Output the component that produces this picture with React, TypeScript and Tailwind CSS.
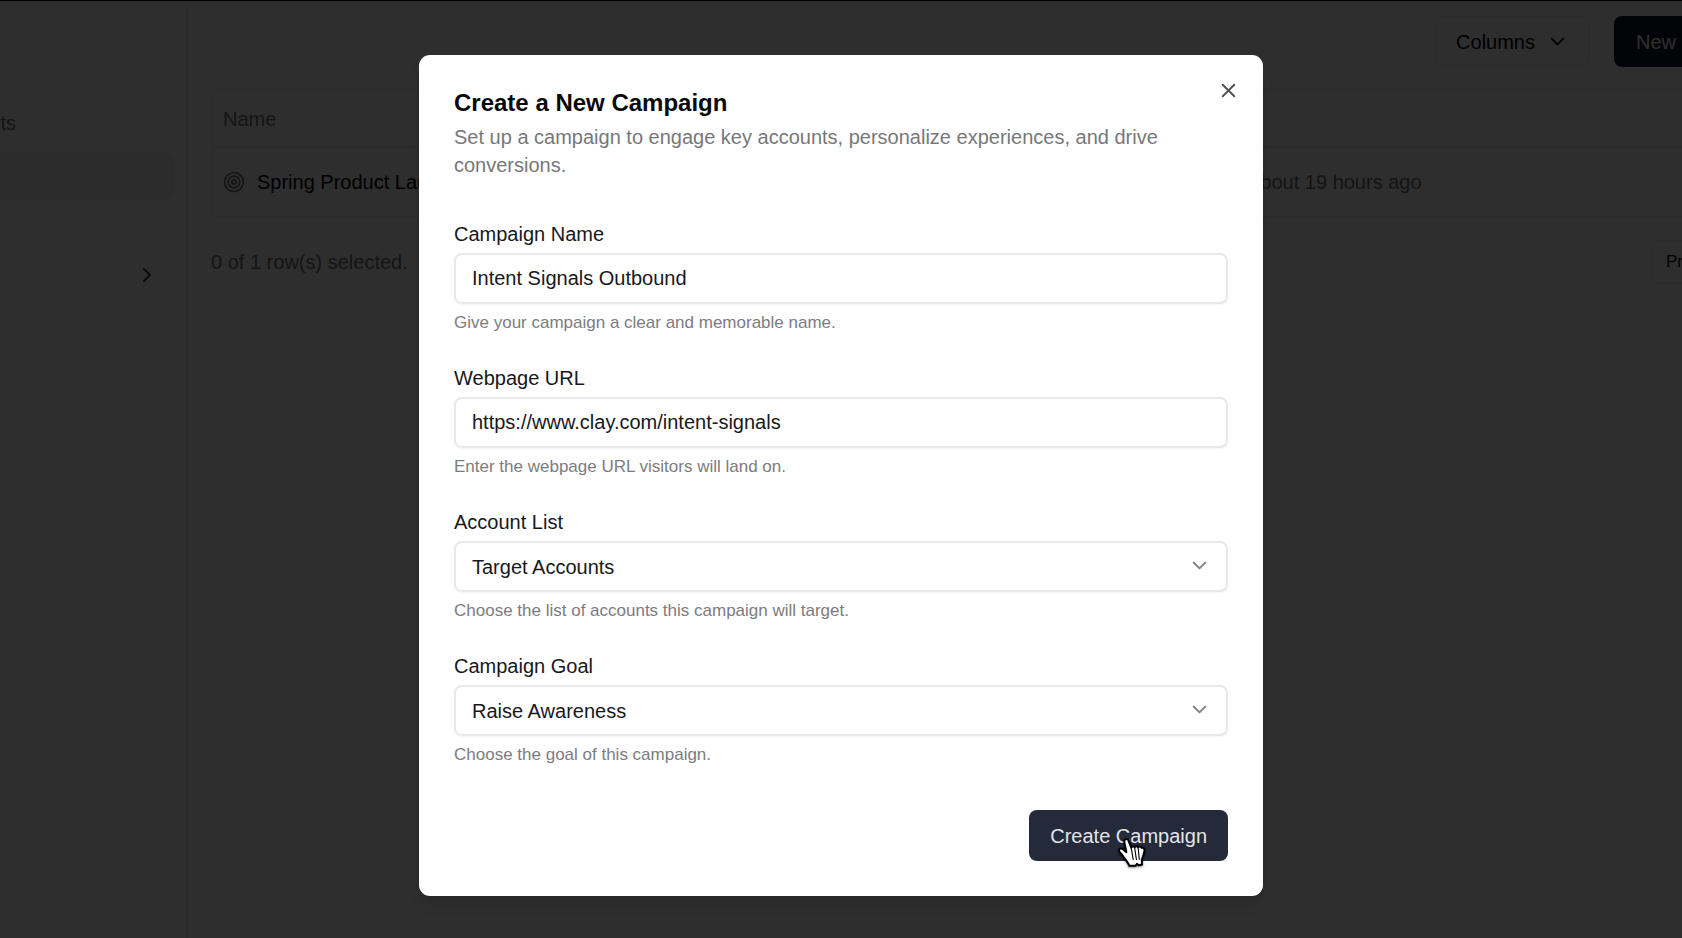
import { ChevronDown, ChevronRight, X } from "lucide-react";
import type { ReactNode } from "react";

const controlClass =
  "block h-[51px] w-full appearance-none rounded-lg border-2 border-[#e9e9eb] bg-white px-4 text-[20px] text-[#18181b] shadow-xs outline-none";

function Field({ id, label, help, children }: { id: string; label: string; help: string; children: ReactNode }) {
  return (
    <div className="flex flex-col gap-[9px]">
      <label htmlFor={id} className="text-[20px] leading-5 text-[#18181b]">
        {label}
      </label>
      {children}
      <p id={`${id}-help`} className="text-[17px] leading-5 text-[#7c7c80]">
        {help}
      </p>
    </div>
  );
}

function TextField({ id, label, help, value }: { id: string; label: string; help: string; value: string }) {
  return (
    <Field id={id} label={label} help={help}>
      <input id={id} type="text" defaultValue={value} aria-describedby={`${id}-help`} className={controlClass} />
    </Field>
  );
}

function SelectField({ id, label, help, value }: { id: string; label: string; help: string; value: string }) {
  return (
    <Field id={id} label={label} help={help}>
      <div className="relative">
        <select id={id} defaultValue={value} aria-describedby={`${id}-help`} className={controlClass}>
          <option value={value}>{value}</option>
        </select>
        <ChevronDown size={23} className="pointer-events-none absolute top-[13px] right-[17px] text-[#808083]" />
      </div>
    </Field>
  );
}

function CampaignIcon() {
  return (
    <svg width="22" height="22" viewBox="0 0 22 22" fill="none" stroke="currentColor" strokeWidth="1.7" aria-hidden="true">
      <circle cx="11" cy="11" r="9.5" />
      <circle cx="11" cy="11" r="5.8" />
      <circle cx="11" cy="11" r="2.2" />
    </svg>
  );
}

function HandPointer() {
  return (
    <svg
      className="pointer-events-none absolute top-[25px] left-[87px] drop-shadow-[0_1px_1px_rgba(0,0,0,0.5)]"
      width="32"
      height="36"
      viewBox="0 0 32 36"
      aria-hidden="true"
    >
      <path
        d="M9.2 4.4C10.5 3.4 12 4 12.5 5.6L15.2 12.6C15.8 11.2 17.8 11.2 18.6 12.2C19.5 11 21.4 11.1 22.1 12.2C23.2 11.2 25 11.4 25.6 12.8C27.2 12.4 28.6 13.6 28.5 15.4C28.3 19 27 22 25.8 24.6L26 29.6L22.6 30.2L21 28.8L19.4 30.8L13.2 30.8C12.6 27.8 10.2 25.6 8.4 23C6.8 20.6 5.4 18.8 3.4 16.6C2.2 14.6 4 12.8 6.2 13.8L10.4 17.2L8.4 7.6C8.1 6.2 8.2 5.2 9.2 4.4Z"
        fill="#fff"
        stroke="#000"
        strokeWidth="2"
        strokeLinejoin="round"
      />
      <path d="M15.2 12.6L17.2 24.6M18.6 12.2L20.4 24.6M22.1 12.4L23.3 24.4" stroke="#000" strokeWidth="1.1" strokeLinecap="round" />
    </svg>
  );
}

function Sidebar() {
  return (
    <nav className="-ml-[190px] w-[378px] shrink-0 border-r-2 border-[#e4e4e7] pt-[92px] pr-[11px] text-[20px] text-[#71717a]">
      <a href="#lists" className="flex h-[46px] items-center pl-[87px]">
        Account Lists
      </a>
      <a href="#campaigns" aria-label="Campaigns" className="mt-[6px] block h-[47px] rounded-lg bg-[#f4f4f5]" />
      <button type="button" aria-label="Expand section" className="mt-[52px] mr-[16px] ml-auto flex h-[48px] items-center text-[#3f3f46]">
        <ChevronRight size={24} />
      </button>
    </nav>
  );
}

function CampaignsPage() {
  return (
    <main className="-mr-[130px] min-w-0 grow px-[23px] pt-2">
      <div className="flex h-[51px] justify-end gap-6">
        <button type="button" className="flex items-center gap-[11px] rounded-lg border-2 border-[#f1f1f3] px-[19px] text-[20px]">
          Columns <ChevronDown size={23} />
        </button>
        <button type="button" className="w-[175px] rounded-lg bg-[#0f172a] pl-[22px] text-left text-[20px] text-white">
          New Campaign
        </button>
      </div>
      <div className="mt-[22px] rounded-lg border-2 border-[#f1f1f3]">
        <table className="w-full table-fixed text-left text-[20px] text-[#71717a]">
          <thead>
            <tr className="h-[56px] border-b-2 border-[#e9e9ec]">
              <th scope="col" className="w-[1034px] pl-[10px] font-normal">
                Name
              </th>
              <th scope="col" aria-label="Created" className="font-normal" />
            </tr>
          </thead>
          <tbody>
            <tr className="h-[69px]">
              <td className="pl-[10px]">
                <div className="flex items-center gap-3">
                  <CampaignIcon />
                  <span className="text-black">Spring Product Launch</span>
                </div>
              </td>
              <td>About 19 hours ago</td>
            </tr>
          </tbody>
        </table>
      </div>
      <div className="mt-[22px] flex h-[44px] items-center justify-between">
        <p className="text-[20px] text-[#71717a]">0 of 1 row(s) selected.</p>
        <div className="flex h-full w-[138px]">
          <button type="button" className="rounded-lg border-2 border-[#f1f1f3] px-[13px] text-[17px] font-medium">
            Previous
          </button>
        </div>
      </div>
    </main>
  );
}

function CreateCampaignDialog() {
  return (
    <div
      role="dialog"
      aria-modal="true"
      aria-labelledby="dialog-title"
      aria-describedby="dialog-description"
      className="relative w-full max-w-[844px] rounded-[11px] bg-white p-[35px] shadow-lg"
    >
      <h2 id="dialog-title" className="text-[24px] leading-[26px] font-bold text-[#09090b]">
        Create a New Campaign
      </h2>
      <p id="dialog-description" className="mt-[7px] text-[20px] leading-7 text-[#77777b]">
        Set up a campaign to engage key accounts, personalize experiences, and drive conversions.
      </p>
      <form className="mt-[45px] flex flex-col gap-[35px]" onSubmit={(event) => event.preventDefault()}>
        <TextField
          id="campaign-name"
          label="Campaign Name"
          value="Intent Signals Outbound"
          help="Give your campaign a clear and memorable name."
        />
        <TextField
          id="webpage-url"
          label="Webpage URL"
          value="https://www.clay.com/intent-signals"
          help="Enter the webpage URL visitors will land on."
        />
        <SelectField
          id="account-list"
          label="Account List"
          value="Target Accounts"
          help="Choose the list of accounts this campaign will target."
        />
        <SelectField id="campaign-goal" label="Campaign Goal" value="Raise Awareness" help="Choose the goal of this campaign." />
        <div className="mt-[10px] flex justify-end">
          <button type="submit" className="relative h-[51px] rounded-lg bg-[#252a3a] px-[21px] text-[20px] text-[#e2e4ea]">
            Create Campaign
            <HandPointer />
          </button>
        </div>
      </form>
      <button type="button" aria-label="Close" className="absolute top-[24px] right-[23px] text-[#525256]">
        <X size={23} />
      </button>
    </div>
  );
}

export default function App() {
  return (
    <div className="relative flex min-h-screen flex-col overflow-hidden bg-white font-['Liberation_Sans',Arial,sans-serif] text-black">
      <div className="flex grow flex-col border-t border-black" aria-hidden="true">
        <div className="h-[7px] border-b border-[#eeeef0]" />
        <div className="flex grow">
          <Sidebar />
          <CampaignsPage />
        </div>
      </div>
      <div className="absolute inset-0 flex items-center justify-center bg-black/82 pt-[13px]">
        <CreateCampaignDialog />
      </div>
    </div>
  );
}
